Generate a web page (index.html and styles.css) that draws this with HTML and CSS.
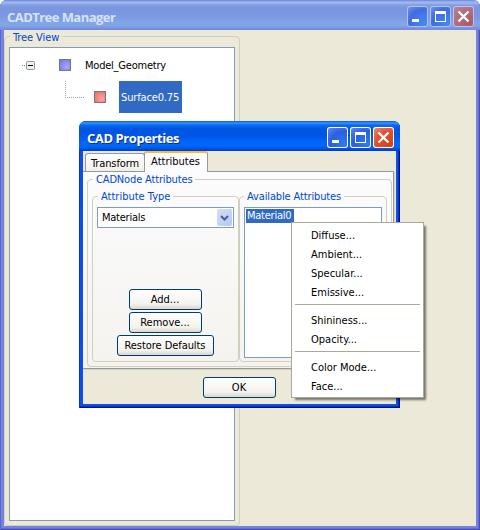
FILE: index.html
```html
<!DOCTYPE html>
<html lang="en">
<head>
<meta charset="utf-8">
<title>CADTree Manager</title>
<link rel="stylesheet" href="styles.css">
</head>
<body>
<div class="window main inactive">
  <header class="titlebar">
    <h1 class="title"><span class="t-main">CADTree Manager</span></h1>
    <div class="controls">
      <svg class="ctl" viewBox="0 0 21 21"><path class="glyph" d="M5 13h7v3H5z"/></svg>
      <svg class="ctl" viewBox="0 0 21 21"><path class="glyph" fill-rule="evenodd" d="M5 5h11v11H5zM6 8v7h9V8z"/></svg>
      <svg class="ctl close" viewBox="0 0 21 21"><path class="cross" d="M5.5 5.5l10 10M15.5 5.5l-10 10"/></svg>
    </div>
  </header>
  <main class="client">
    <fieldset class="group tree-group">
      <legend><span class="t-tree">Tree View</span></legend>
      <div class="tree">
        <div class="row root">
          <svg class="toggle" viewBox="0 0 13 9" width="13" height="9"><path d="M0 4.500h1M2 4.500h1" stroke="#808080"/><rect x="4.500" y=".5" width="8" height="8" rx="1" fill="#f2f0ea" stroke="#7898b5"/><path d="M6 4.500h5" stroke="#000"/></svg>
          <i class="cube blue"></i>
          <span class="node t-model">Model_Geometry</span>
        </div>
        <div class="row child">
          <i class="elbow"></i>
          <i class="cube red"></i>
          <span class="node selected"><span class="t-surface">Surface0.75</span></span>
        </div>
      </div>
    </fieldset>
  </main>
</div>

<div class="window dialog">
  <header class="titlebar">
    <h2 class="title"><span class="t-dialog">CAD Properties</span></h2>
    <div class="controls">
      <svg class="ctl" viewBox="0 0 21 21"><path class="glyph" d="M5 13h7v3H5z"/></svg>
      <svg class="ctl" viewBox="0 0 21 21"><path class="glyph" fill-rule="evenodd" d="M5 5h11v11H5zM6 8v7h9V8z"/></svg>
      <svg class="ctl close" viewBox="0 0 21 21"><path class="cross" d="M5.500 5.500l10 10M15.500 5.500l-10 10"/></svg>
    </div>
  </header>
  <div class="client">
    <nav class="tabs">
      <span class="tab"><span class="t-transform">Transform</span></span>
      <span class="tab active"><span class="t-attributes">Attributes</span></span>
    </nav>
    <div class="panel">
      <fieldset class="group node-group">
        <legend><span class="t-cadnode">CADNode Attributes</span></legend>
        <div class="columns">
          <fieldset class="group type-group">
            <legend><span class="t-type">Attribute Type</span></legend>
            <div class="combo"><span class="t-materials">Materials</span>
              <span class="drop"><svg viewBox="0 0 9 6" width="9" height="6"><path d="M1 1l3.500 3.500L8 1" fill="none" stroke="#4d6185" stroke-width="2"/></svg></span>
            </div>
            <div class="buttons">
              <button class="btn"><span class="t-add">Add...</span></button>
              <button class="btn"><span class="t-remove">Remove...</span></button>
              <button class="btn wide"><span class="t-restore">Restore Defaults</span></button>
            </div>
          </fieldset>
          <fieldset class="group list-group">
            <legend><span class="t-available">Available Attributes</span></legend>
            <div class="list"><span class="item"><span class="t-mat0">Material0</span></span></div>
          </fieldset>
        </div>
      </fieldset>
    </div>
    <footer class="footer"><button class="btn"><span class="t-ok">OK</span></button></footer>
  </div>
</div>

<div class="menu">
  <div class="entry">Diffuse...</div>
  <div class="entry">Ambient...</div>
  <div class="entry">Specular...</div>
  <div class="entry">Emissive...</div>
  <hr>
  <div class="entry">Shininess...</div>
  <div class="entry">Opacity...</div>
  <hr>
  <div class="entry">Color Mode...</div>
  <div class="entry">Face...</div>
</div>
</body>
</html>
```
FILE: styles.css
```css
* { box-sizing: border-box; }
body {
  margin: 0;
  width: 480px;
  height: 530px;
  overflow: hidden;
  background: #fff;
  color: #000;
  font: 11px/13px "DejaVu Sans Condensed", "DejaVu Sans", sans-serif;
}
.window { display: flex; flex-direction: column; background: #0831d9; border-radius: 7px 7px 0 0; }
.main {
  width: 480px; height: 530px; padding: 0 4px 4px;
  background: #7583dc;
  box-shadow: inset 1px 0 #5a66cf, inset -1px -1px #4a4fb4, inset -2px -2px #666fd0;
}
.titlebar {
  display: flex; align-items: center; justify-content: space-between;
  flex: none; height: 30px; margin: 0 -4px; padding: 1px 6px 0 8px;
  border-radius: 7px 7px 0 0;
  background: linear-gradient(#0058e6 0, #3a93ff 2px, #0a6cf5 4px, #0055e0 8px, #0056e5 15px, #0066fb 21px, #0066fb 25px, #005be8 27px, #003dc0 30px);
}
.inactive .titlebar {
  padding-left: 7px;
  background: linear-gradient(#7184df 0, #9db6ed 2px, #9db9ec 3px, #839de3 5px, #7b96e0 8px, #7b97e1 15px, #80a6e8 23px, #80a6e8 26px, #7a92e2 28px, #7489dd 30px);
}
.title { margin: 0; padding-top: 3px; font: bold 13px/16px "Open Sans", "Noto Sans", sans-serif; color: #fff; text-shadow: 1px 1px #0a2f8c; white-space: nowrap; }
.inactive .title { color: #d8e4f8; text-shadow: none; }
.controls { display: flex; gap: 2px; padding-top: 2px; }
.ctl {
  width: 21px; height: 21px; border-radius: 3px;
  box-shadow: inset 0 0 0 1px #fff;
  background: radial-gradient(circle at 80% 85%, #2d7bf4, #2b5fe0 55%, #6c8df0 100%);
}
.inactive .ctl { box-shadow: inset 0 0 0 1px #b4c4f2; background: radial-gradient(circle at 80% 85%, #4489f4, #426ce2 60%, #7d97ee 100%); }
.ctl.close { background: radial-gradient(circle at 80% 85%, #d8401a, #e0502c 55%, #f0937c 100%); }
.inactive .ctl.close { background: radial-gradient(circle at 80% 85%, #ab5a66, #b46c7c 55%, #b989a8 100%); }
.glyph { fill: #fff; }
.cross { stroke: #fff; stroke-width: 2.4; }
.client { flex: 1; min-height: 0; display: flex; flex-direction: column; background: #ece9d8; }
.group { margin: 0; padding: 0; min-width: 0; border: 1px solid #d0d0bf; border-radius: 4px; }
legend { height: 13px; margin-left: 1px; padding: 0 3px; color: #0046d5; white-space: nowrap; }
.tree-group { width: 236px; height: 496px; padding: 4px 4px 4px; }
.tree-group, .tree-group > legend { line-height: 15px; }
.tree { height: 474px; border: 1px solid #7f9db9; background: #fff; padding-top: 1px; }
.row { display: flex; align-items: center; height: 32px; }
.root { padding-left: 12px; }
.toggle { margin-right: 24px; }
.cube { width: 12px; height: 12px; border: 1px solid #777; }
.blue { background: radial-gradient(circle at 65% 65%, #a8a8ff, #7070f0); }
.red { background: radial-gradient(circle at 65% 65%, #ffa4a4, #f06464); }
.root .node { margin-left: 14px; }
.child { padding-left: 55px; }
.elbow {
  width: 19px; height: 17px; margin: 0 10px 15px 0;
  background:
    repeating-linear-gradient(#a0a0a0 0 1px, transparent 1px 2px) 0 0 / 1px 100% no-repeat,
    repeating-linear-gradient(90deg, #a0a0a0 0 1px, transparent 1px 2px) 0 100% / 100% 1px no-repeat;
}
.selected { display: flex; align-items: center; width: 63px; height: 32px; margin-left: 13px; padding-left: 2px; background: #316ac5; color: #fff; }

.dialog {
  position: absolute; left: 79px; top: 121px; width: 321px; height: 287px; padding: 0 4px 4px;
  box-shadow: inset 1px 0 #0831d9, inset -1px -1px #00138c, inset -2px -2px #0830c8;
  background: #0c50e8;
}
.tabs { display: flex; align-items: flex-end; height: 20px; padding-left: 2px; flex: none; }
.tab { display: flex; justify-content: center; width: 60px; height: 18px; padding-top: 3px; border: 1px solid #919b9c; border-bottom: 0; border-radius: 3px 3px 0 0; background: linear-gradient(#fff, #f0f0ea); }
.tab.active { position: relative; width: 64px; height: 21px; margin: 0 0 -1px -1px; padding: 2px 1px 0 0; border-top: 2px solid #ffb92f; background: #fcfcfe; }
.panel { width: 311px; height: 198px; padding: 1px 1px 0 4px; border: 1px solid #919b9c; border-left: 0; background: linear-gradient(#fcfcfe, #f4f3ee); box-shadow: 1px 1px #d5d2c2; flex: none; }
.node-group { width: 305px; height: 194px; padding: 4px 4px 0; }
.columns { display: flex; }
.type-group { width: 147px; height: 172px; padding: 4px 4px 0; }
.list-group { width: 148px; height: 172px; padding: 4px 4px 0; }
.list-group legend { margin-left: 0; }
.combo { display: flex; align-items: center; justify-content: space-between; width: 137px; height: 21px; padding: 0 1px 0 4px; border: 1px solid #7f9db9; background: #fff; }
.drop { display: flex; align-items: center; justify-content: center; width: 15px; height: 17px; border-radius: 2px; background: linear-gradient(135deg, #d2defc, #b3c8f8); }
.buttons { display: flex; flex-direction: column; align-items: center; gap: 2px; margin-top: 61px; }
.btn { display: flex; align-items: center; justify-content: center; width: 73px; height: 21px; padding: 0 1px 0 0; border: 1px solid #003c74; border-radius: 3px; background: linear-gradient(#fff, #f3f2ed 75%, #dcd6cb); color: #000; font: inherit; }
.btn.wide { width: 97px; }
.list { height: 151px; padding: 1px; border: 1px solid #7f9db9; background: #fff; }
.list-group .list { width: 138px; }
.item { display: flex; width: 48px; height: 14px; padding-left: 1px; line-height: 14px; background: #316ac5; color: #fff; }
.footer { display: flex; justify-content: center; padding-top: 8px; }
.menu {
  position: absolute; left: 291px; top: 222px; width: 133px; height: 176px; padding: 3px;
  border: 1px solid #aca899; background: #fff; box-shadow: 3px 3px 2px -1px rgba(0, 0, 0, .5);
}
.entry { height: 19px; padding-left: 16px; line-height: 19px; white-space: nowrap; }
.menu hr { height: 1px; margin: 2px 0 6px; border: 0; background: #aca899; }

/* Per-label tracking */
.t-main { letter-spacing: -.55px; }
.t-dialog { letter-spacing: -.42px; }
.t-tree, .t-transform { letter-spacing: -.1px; }
.t-cadnode { letter-spacing: -.15px; }
.t-available { letter-spacing: -.13px; }
.t-model { letter-spacing: -.22px; }
.t-surface { letter-spacing: -.15px; }
.t-materials, .t-mat0 { letter-spacing: -.25px; }
.t-restore { letter-spacing: -.06px; }
```
